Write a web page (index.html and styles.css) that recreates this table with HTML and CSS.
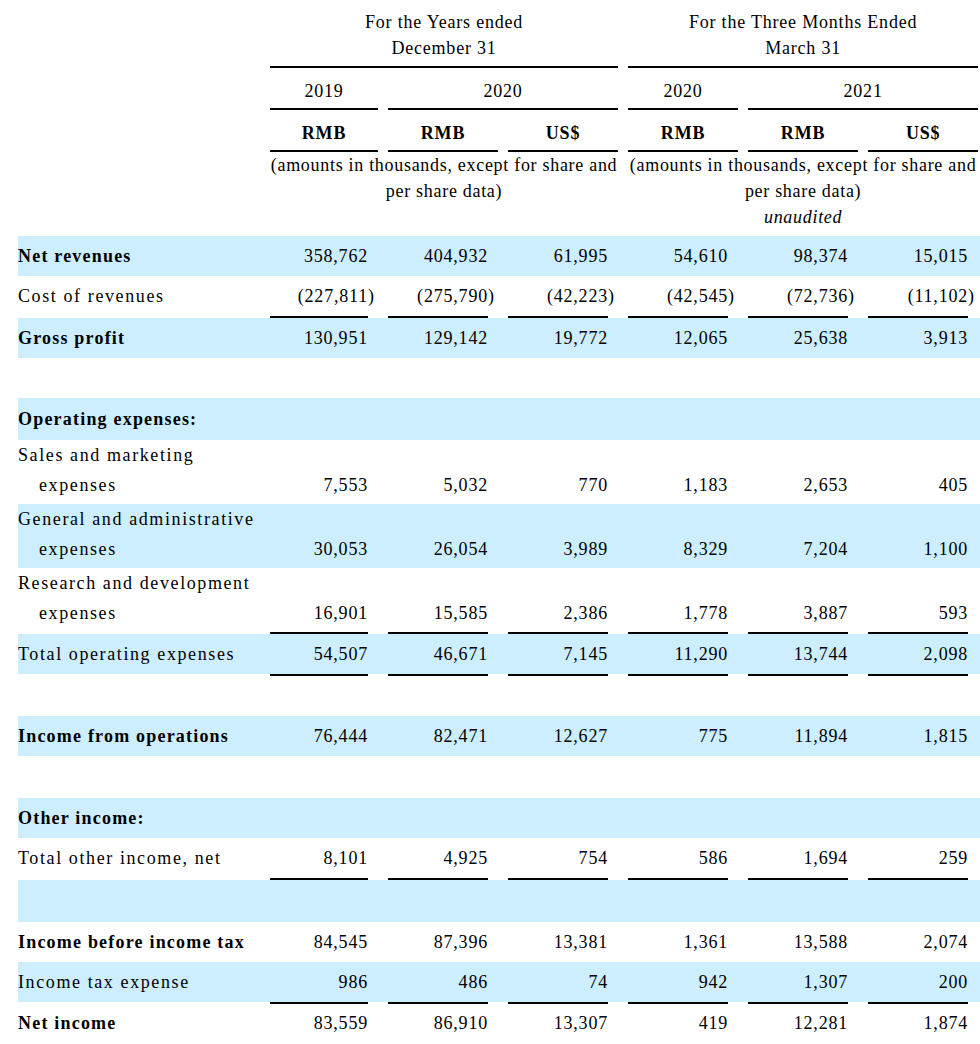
FILE: index.html
```html
<!DOCTYPE html>
<html>
<head>
<meta charset="utf-8">
<link rel="stylesheet" href="styles.css">
</head>
<body>
<div class="page">
<table class="fin">
  <colgroup>
    <col class="c-label">
    <col class="c-num1"><col class="c-par"><col class="c-gap">
    <col class="c-num"><col class="c-par"><col class="c-gap">
    <col class="c-num"><col class="c-par"><col class="c-gap">
    <col class="c-num"><col class="c-par"><col class="c-gap">
    <col class="c-num"><col class="c-par"><col class="c-gap">
    <col class="c-num"><col class="c-par"><col class="c-last">
  </colgroup>
  <thead>
    <tr class="h-title">
      <td></td>
      <td colspan="8" class="hc ul">For the Years ended<br>December 31</td>
      <td></td>
      <td colspan="8" class="hc ul">For the Three Months Ended<br>March 31</td>
      <td></td>
    </tr>
    <tr class="h-sub">
      <td></td>
      <td colspan="2" class="hc ul">2019</td><td></td>
      <td colspan="5" class="hc ul">2020</td><td></td>
      <td colspan="2" class="hc ul">2020</td><td></td>
      <td colspan="5" class="hc ul">2021</td><td></td>
    </tr>
    <tr class="h-sub">
      <td></td>
      <td colspan="2" class="hc ul b">RMB</td><td></td>
      <td colspan="2" class="hc ul b">RMB</td><td></td>
      <td colspan="2" class="hc ul b">US$</td><td></td>
      <td colspan="2" class="hc ul b">RMB</td><td></td>
      <td colspan="2" class="hc ul b">RMB</td><td></td>
      <td colspan="2" class="hc ul b">US$</td><td></td>
    </tr>
    <tr class="h-note">
      <td></td>
      <td colspan="8" class="hc">(amounts in thousands, except for share and<br>per share data)</td>
      <td></td>
      <td colspan="8" class="hc">(amounts in thousands, except for share and<br>per share data)<br><em>unaudited</em></td>
      <td></td>
    </tr>
  </thead>
  <tbody>
    <tr class="r blue">
      <td class="lbl b">Net revenues</td>
      <td class="n">358,762</td><td></td><td></td>
      <td class="n">404,932</td><td></td><td></td>
      <td class="n">61,995</td><td></td><td></td>
      <td class="n">54,610</td><td></td><td></td>
      <td class="n">98,374</td><td></td><td></td>
      <td class="n">15,015</td><td></td><td></td>
    </tr>
    <tr class="r line">
      <td class="lbl">Cost of revenues</td>
      <td class="n u">(227,811</td><td class="p">)</td><td></td>
      <td class="n u">(275,790</td><td class="p">)</td><td></td>
      <td class="n u">(42,223</td><td class="p">)</td><td></td>
      <td class="n u">(42,545</td><td class="p">)</td><td></td>
      <td class="n u">(72,736</td><td class="p">)</td><td></td>
      <td class="n u">(11,102</td><td class="p">)</td><td></td>
    </tr>
    <tr class="r blue">
      <td class="lbl b">Gross profit</td>
      <td class="n">130,951</td><td></td><td></td>
      <td class="n">129,142</td><td></td><td></td>
      <td class="n">19,772</td><td></td><td></td>
      <td class="n">12,065</td><td></td><td></td>
      <td class="n">25,638</td><td></td><td></td>
      <td class="n">3,913</td><td></td><td></td>
    </tr>
    <tr class="r"><td colspan="19"></td></tr>
    <tr class="r tall blue">
      <td class="lbl b" colspan="19">Operating expenses:</td>
    </tr>
    <tr class="r two">
      <td class="lbl">Sales and marketing<span class="cont">expenses</span></td>
      <td class="n">7,553</td><td></td><td></td>
      <td class="n">5,032</td><td></td><td></td>
      <td class="n">770</td><td></td><td></td>
      <td class="n">1,183</td><td></td><td></td>
      <td class="n">2,653</td><td></td><td></td>
      <td class="n">405</td><td></td><td></td>
    </tr>
    <tr class="r two blue">
      <td class="lbl">General and administrative<span class="cont">expenses</span></td>
      <td class="n">30,053</td><td></td><td></td>
      <td class="n">26,054</td><td></td><td></td>
      <td class="n">3,989</td><td></td><td></td>
      <td class="n">8,329</td><td></td><td></td>
      <td class="n">7,204</td><td></td><td></td>
      <td class="n">1,100</td><td></td><td></td>
    </tr>
    <tr class="r two line">
      <td class="lbl">Research and development<span class="cont">expenses</span></td>
      <td class="n u">16,901</td><td></td><td></td>
      <td class="n u">15,585</td><td></td><td></td>
      <td class="n u">2,386</td><td></td><td></td>
      <td class="n u">1,778</td><td></td><td></td>
      <td class="n u">3,887</td><td></td><td></td>
      <td class="n u">593</td><td></td><td></td>
    </tr>
    <tr class="r blue line">
      <td class="lbl">Total operating expenses</td>
      <td class="n u">54,507</td><td></td><td></td>
      <td class="n u">46,671</td><td></td><td></td>
      <td class="n u">7,145</td><td></td><td></td>
      <td class="n u">11,290</td><td></td><td></td>
      <td class="n u">13,744</td><td></td><td></td>
      <td class="n u">2,098</td><td></td><td></td>
    </tr>
    <tr class="r"><td colspan="19"></td></tr>
    <tr class="r blue">
      <td class="lbl b">Income from operations</td>
      <td class="n">76,444</td><td></td><td></td>
      <td class="n">82,471</td><td></td><td></td>
      <td class="n">12,627</td><td></td><td></td>
      <td class="n">775</td><td></td><td></td>
      <td class="n">11,894</td><td></td><td></td>
      <td class="n">1,815</td><td></td><td></td>
    </tr>
    <tr class="r tall"><td colspan="19"></td></tr>
    <tr class="r blue">
      <td class="lbl b" colspan="19">Other income:</td>
    </tr>
    <tr class="r line">
      <td class="lbl">Total other income, net</td>
      <td class="n u">8,101</td><td></td><td></td>
      <td class="n u">4,925</td><td></td><td></td>
      <td class="n u">754</td><td></td><td></td>
      <td class="n u">586</td><td></td><td></td>
      <td class="n u">1,694</td><td></td><td></td>
      <td class="n u">259</td><td></td><td></td>
    </tr>
    <tr class="r tall blue"><td colspan="19"></td></tr>
    <tr class="r">
      <td class="lbl b">Income before income tax</td>
      <td class="n">84,545</td><td></td><td></td>
      <td class="n">87,396</td><td></td><td></td>
      <td class="n">13,381</td><td></td><td></td>
      <td class="n">1,361</td><td></td><td></td>
      <td class="n">13,588</td><td></td><td></td>
      <td class="n">2,074</td><td></td><td></td>
    </tr>
    <tr class="r blue line">
      <td class="lbl">Income tax expense</td>
      <td class="n u">986</td><td></td><td></td>
      <td class="n u">486</td><td></td><td></td>
      <td class="n u">74</td><td></td><td></td>
      <td class="n u">942</td><td></td><td></td>
      <td class="n u">1,307</td><td></td><td></td>
      <td class="n u">200</td><td></td><td></td>
    </tr>
    <tr class="r last">
      <td class="lbl b">Net income</td>
      <td class="n">83,559</td><td></td><td></td>
      <td class="n">86,910</td><td></td><td></td>
      <td class="n">13,307</td><td></td><td></td>
      <td class="n">419</td><td></td><td></td>
      <td class="n">12,281</td><td></td><td></td>
      <td class="n">1,874</td><td></td><td></td>
    </tr>
  </tbody>
</table>
</div>
</body>
</html>
```

FILE: styles.css
```css
html, body {
  margin: 0;
  padding: 0;
  background: #ffffff;
}

.page {
  padding-left: 18px;
  width: 962px;
  overflow: hidden;
}

.fin {
  border-collapse: separate;
  border-spacing: 0;
  table-layout: fixed;
  width: 962px;
  font-family: "Liberation Serif", "Times New Roman", serif;
  font-size: 18px;
  letter-spacing: 0.8px;
  color: #000000;
}

.fin td {
  padding: 0;
  white-space: nowrap;
}

.c-label { width: 252px; }
.c-num1 { width: 98px; }
.c-num { width: 100px; }
.c-par { width: 10px; }
.c-gap { width: 10px; }
.c-last { width: 2px; }

.b { font-weight: bold; }

.hc {
  text-align: center;
  line-height: 26px;
}

.hc.ul {
  border-bottom: 2px solid #000000;
}

.h-title td {
  padding-top: 9px;
  padding-bottom: 5px;
  vertical-align: bottom;
}

.h-sub td {
  padding-top: 10px;
  padding-bottom: 4px;
  vertical-align: bottom;
}

.h-note td {
  padding-bottom: 6px;
  vertical-align: top;
  letter-spacing: 0.7px;
}

.h-note em {
  font-style: italic;
}

.r td {
  height: 40px;
  line-height: 30px;
  vertical-align: middle;
  background-clip: padding-box;
}

.r.tall td {
  height: 42px;
}

.r.two td {
  vertical-align: bottom;
  padding-bottom: 4px;
  height: 60px;
}

.r.two td.lbl {
  vertical-align: top;
  padding-bottom: 0;
  padding-top: 0;
  height: 64px;
}

.r.line td {
  border-bottom: 2px solid transparent;
}

.r.line td.u {
  border-bottom-color: #000000;
}

.r.blue td {
  background-color: #cceeff;
}

.r.last td {
  height: 38px;
  padding-bottom: 2px;
}

.lbl {
  text-align: left;
  letter-spacing: 1.6px;
}

.lbl.b {
  letter-spacing: 1.2px;
}

.cont {
  display: block;
  padding-left: 21px;
}

.n {
  text-align: right;
}

.p {
  text-align: left;
}
```
